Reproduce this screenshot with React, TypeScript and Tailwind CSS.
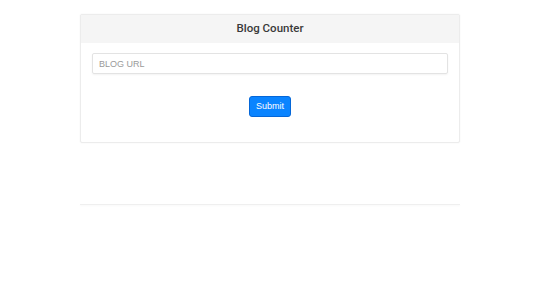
import React from 'react';

const App = () => {
  return (
    <div className="w-[540px] h-[304px] bg-white pt-[14px] font-['Roboto',sans-serif]">
      <div className="mx-auto w-[380px]">
        <div className="border border-[#ececec] rounded-[2px] shadow-[0_0_2px_rgba(0,0,0,0.06)] bg-white">
          <div className="h-[28px] bg-[#f5f5f5] flex items-center justify-center">
            <h1 className="text-[11.5px] font-medium text-[#3a3a3a]">Blog Counter</h1>
          </div>
          <div className="px-[11px] pt-[10px] pb-[25px]">
            <input
              type="text"
              placeholder="BLOG URL"
              className="block w-full h-[21px] border border-[#e3e3e3] rounded-[2px] px-[6px] text-[9px] text-[#555] placeholder:text-[#9a9a9a] outline-none shadow-[0_1px_2px_rgba(0,0,0,0.05)] font-['Liberation_Sans',sans-serif]"
            />
            <div className="flex justify-center mt-[22px]">
              <button className="w-[42px] h-[21px] bg-[#0a84ff] border border-[#0567d8] rounded-[3px] text-white text-[9px] font-['Liberation_Sans',sans-serif]">
                Submit
              </button>
            </div>
          </div>
        </div>
        <div className="mt-[61px] h-px bg-[#efefef] shadow-[0_1px_2px_rgba(0,0,0,0.04)]" />
      </div>
    </div>
  );
};

export default App;
